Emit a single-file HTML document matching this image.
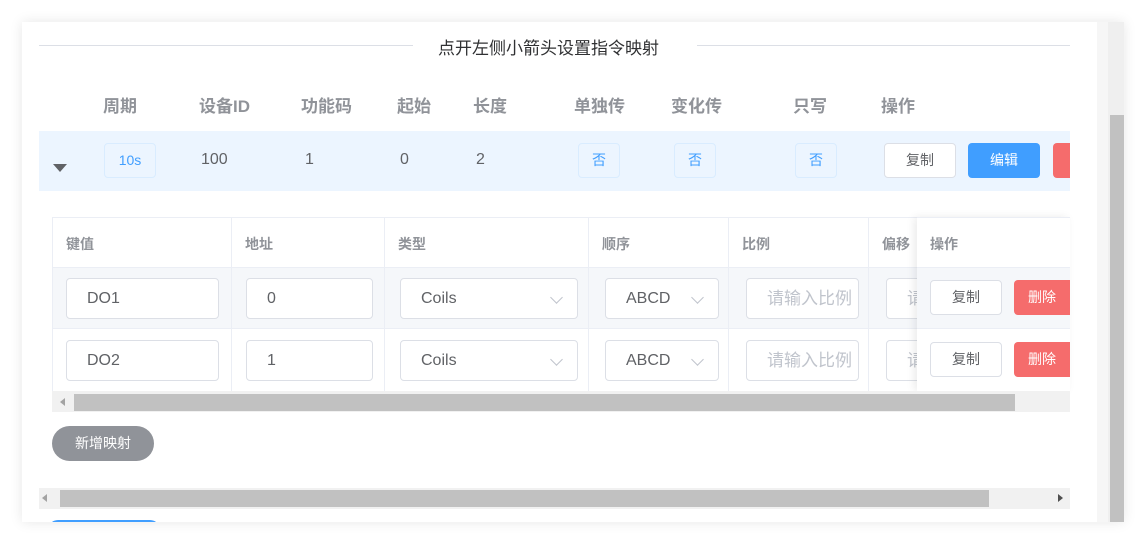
<!DOCTYPE html>
<html><head><meta charset="utf-8"><style>
*{box-sizing:border-box;margin:0;padding:0}
body{width:1146px;height:545px;background:#fff;position:relative;overflow:hidden;font-family:"Liberation Sans","Noto Sans CJK SC",sans-serif;color:#606266}
.a{position:absolute}
.card{left:22px;top:22px;width:1102px;height:500px;background:#fff;box-shadow:0 0 12px rgba(0,0,0,.1)}
.hd{font-size:17px;font-weight:bold;color:#909399;top:92px}
.tag{border:1px solid #d9ecff;background:#ecf5ff;color:#409eff;border-radius:4px;font-size:14px;text-align:center}
.btn{border-radius:4px;font-size:14px;text-align:center}
.th{font-size:14px;font-weight:bold;color:#909399;top:234px}
.inp{background:#fff;border:1px solid #dcdfe6;border-radius:4px;height:41px;font-size:16px;color:#606266;padding-left:20px;line-height:39px}
.ph{color:#c0c4cc;overflow:hidden;white-space:nowrap;font-size:17px}
.arr{position:absolute;right:16px;top:14px;width:9px;height:9px;border-right:1px solid #c0c4cc;border-bottom:1px solid #c0c4cc;transform:rotate(45deg)}
.vl{width:1px;background:#ebeef5}
</style></head><body>
<div class="a card"></div>
<div class="a" style="left:1097px;top:22px;width:11px;height:500px;background:#f6f6f6"></div>
<div class="a" style="left:1108px;top:22px;width:16px;height:500px;background:#efefef"></div>
<div class="a" style="left:1110px;top:115px;width:14px;height:407px;background:#c1c1c1"></div>

<div class="a" style="left:39px;top:45px;width:374px;height:1px;background:#dcdfe6"></div>
<div class="a" style="left:697px;top:45px;width:373px;height:1px;background:#dcdfe6"></div>
<div class="a" style="left:438px;top:34px;font-size:17px;color:#303133">点开左侧小箭头设置指令映射</div>

<div class="a hd" style="left:103px">周期</div>
<div class="a hd" style="left:199px">设备ID</div>
<div class="a hd" style="left:301px">功能码</div>
<div class="a hd" style="left:397px">起始</div>
<div class="a hd" style="left:473px">长度</div>
<div class="a hd" style="left:574px">单独传</div>
<div class="a hd" style="left:671px">变化传</div>
<div class="a hd" style="left:793px">只写</div>
<div class="a hd" style="left:881px">操作</div>

<div class="a" style="left:39px;top:131px;width:1031px;height:60px;background:#ecf5ff"></div>
<div class="a" style="left:53px;top:164px;width:0;height:0;border-left:7px solid transparent;border-right:7px solid transparent;border-top:8px solid #606266"></div>
<div class="a tag" style="left:104px;top:143px;width:52px;height:35px;line-height:33px">10s</div>
<div class="a" style="left:201px;top:151px;font-size:16px">100</div>
<div class="a" style="left:305px;top:151px;font-size:16px">1</div>
<div class="a" style="left:400px;top:151px;font-size:16px">0</div>
<div class="a" style="left:476px;top:151px;font-size:16px">2</div>
<div class="a tag" style="left:578px;top:143px;width:42px;height:35px;line-height:33px">否</div>
<div class="a tag" style="left:674px;top:143px;width:42px;height:35px;line-height:33px">否</div>
<div class="a tag" style="left:795px;top:143px;width:42px;height:35px;line-height:33px">否</div>
<div class="a btn" style="left:884px;top:143px;width:72px;height:35px;line-height:33px;border:1px solid #dcdfe6;background:#fff">复制</div>
<div class="a btn" style="left:968px;top:143px;width:72px;height:35px;line-height:35px;background:#409eff;color:#fff">编辑</div>
<div class="a" style="left:1053px;top:143px;width:17px;height:35px;background:#f56c6c;border-radius:4px 0 0 4px"></div>

<div class="a" style="left:52px;top:217px;width:1018px;height:195px;border-top:1px solid #ebeef5;border-left:1px solid #ebeef5"></div>
<div class="a" style="left:53px;top:267px;width:1017px;height:62px;background:#f5f7fa;border-top:1px solid #ebeef5;border-bottom:1px solid #ebeef5"></div>
<div class="a vl" style="left:231px;top:217px;height:174px"></div>
<div class="a vl" style="left:384px;top:217px;height:174px"></div>
<div class="a vl" style="left:588px;top:217px;height:174px"></div>
<div class="a vl" style="left:728px;top:217px;height:174px"></div>
<div class="a vl" style="left:868px;top:217px;height:174px"></div>
<div class="a th" style="left:66px">键值</div>
<div class="a th" style="left:245px">地址</div>
<div class="a th" style="left:398px">类型</div>
<div class="a th" style="left:602px">顺序</div>
<div class="a th" style="left:742px">比例</div>
<div class="a th" style="left:882px">偏移</div>

<div class="a inp" style="left:66px;top:278px;width:153px">DO1</div>
<div class="a inp" style="left:246px;top:278px;width:127px">0</div>
<div class="a inp" style="left:400px;top:278px;width:178px">Coils<span class="arr"></span></div>
<div class="a inp" style="left:605px;top:278px;width:114px">ABCD<span class="arr"></span></div>
<div class="a inp ph" style="left:746px;top:278px;width:113px">请输入比例</div>
<div class="a inp ph" style="left:886px;top:278px;width:40px">请</div>
<div class="a inp" style="left:66px;top:340px;width:153px">DO2</div>
<div class="a inp" style="left:246px;top:340px;width:127px">1</div>
<div class="a inp" style="left:400px;top:340px;width:178px">Coils<span class="arr"></span></div>
<div class="a inp" style="left:605px;top:340px;width:114px">ABCD<span class="arr"></span></div>
<div class="a inp ph" style="left:746px;top:340px;width:113px">请输入比例</div>
<div class="a inp ph" style="left:886px;top:340px;width:40px">请</div>

<div class="a" style="left:917px;top:217px;width:153px;height:174px;background:#fff;box-shadow:-3px 0 8px rgba(0,0,0,.08);border-top:1px solid #ebeef5"></div>
<div class="a" style="left:917px;top:267px;width:153px;height:62px;background:#f5f7fa;border-top:1px solid #ebeef5;border-bottom:1px solid #ebeef5"></div>
<div class="a th" style="left:930px">操作</div>
<div class="a btn" style="left:930px;top:280px;width:72px;height:35px;line-height:33px;border:1px solid #dcdfe6;background:#fff">复制</div>
<div class="a btn" style="left:1014px;top:280px;width:56px;height:35px;line-height:35px;background:#f56c6c;color:#fff;border-radius:4px 0 0 4px;padding-left:14px;text-align:left">删除</div>
<div class="a btn" style="left:930px;top:342px;width:72px;height:35px;line-height:33px;border:1px solid #dcdfe6;background:#fff">复制</div>
<div class="a btn" style="left:1014px;top:342px;width:56px;height:35px;line-height:35px;background:#f56c6c;color:#fff;border-radius:4px 0 0 4px;padding-left:14px;text-align:left">删除</div>

<div class="a" style="left:52px;top:391px;width:1018px;height:21px;background:#f1f1f1"></div>
<div class="a" style="left:74px;top:394px;width:941px;height:17px;background:#c1c1c1"></div>
<div class="a" style="left:60px;top:398px;border-right:5px solid #a3a3a3;border-top:4px solid transparent;border-bottom:4px solid transparent"></div>

<div class="a btn" style="left:52px;top:426px;width:102px;height:35px;line-height:35px;background:#909399;color:#fff;border-radius:18px">新增映射</div>

<div class="a" style="left:39px;top:488px;width:1031px;height:21px;background:#f1f1f1"></div>
<div class="a" style="left:60px;top:490px;width:929px;height:17px;background:#c1c1c1"></div>
<div class="a" style="left:42px;top:494px;border-right:5px solid #a3a3a3;border-top:4px solid transparent;border-bottom:4px solid transparent"></div>
<div class="a" style="left:1058px;top:494px;border-left:5px solid #505050;border-top:4px solid transparent;border-bottom:4px solid transparent"></div>
<div class="a" style="left:48px;top:520px;width:112px;height:10px;background:#409eff;border-radius:16px 16px 0 0;clip-path:inset(0 0 8px 0)"></div>
</body></html>
